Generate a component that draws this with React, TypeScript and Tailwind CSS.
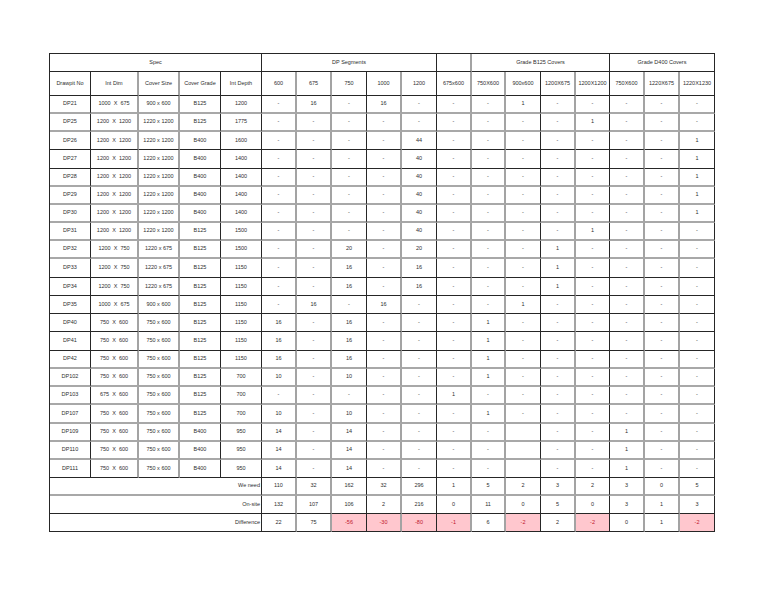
import React from 'react';

type Line = 'd' | 'g';

// right-hand line of each column (dark thin / grey wide, as in the printed sheet)
const vLines: Line[] = ['d', 'g', 'g', 'd', 'd', 'g', 'g', 'd', 'g', 'd', 'g', 'g', 'd', 'g', 'd', 'g', 'g', 'd'];

// bottom line of each grid row (0 = group header, 1 = column header, 2.. = body)
const darkRows = new Set([0, 1, 4, 5, 11, 12, 13, 14, 15, 22, 24, 25]);

const headers = [
  'Drawpit No', 'Int Dim', 'Cover Size', 'Cover Grade', 'Int Depth',
  '600', '675', '750', '1000', '1200',
  '675x600',
  '750X600', '900x600', '1200X675', '1200X1200',
  '750X600', '1220X675', '1220X1230',
];

const rows: string[][] = [
  ['DP21', '1000  X  675', '900 x 600', 'B125', '1200', '-', '16', '-', '16', '-', '-', '-', '1', '-', '-', '-', '-', '-'],
  ['DP25', '1200  X  1200', '1220 x 1200', 'B125', '1775', '-', '-', '-', '-', '-', '-', '-', '-', '-', '1', '-', '-', '-'],
  ['DP26', '1200  X  1200', '1220 x 1200', 'B400', '1600', '-', '-', '-', '-', '44', '-', '-', '-', '-', '-', '-', '-', '1'],
  ['DP27', '1200  X  1200', '1220 x 1200', 'B400', '1400', '-', '-', '-', '-', '40', '-', '-', '-', '-', '-', '-', '-', '1'],
  ['DP28', '1200  X  1200', '1220 x 1200', 'B400', '1400', '-', '-', '-', '-', '40', '-', '-', '-', '-', '-', '-', '-', '1'],
  ['DP29', '1200  X  1200', '1220 x 1200', 'B400', '1400', '-', '-', '-', '-', '40', '-', '-', '-', '-', '-', '-', '-', '1'],
  ['DP30', '1200  X  1200', '1220 x 1200', 'B400', '1400', '-', '-', '-', '-', '40', '-', '-', '-', '-', '-', '-', '-', '1'],
  ['DP31', '1200  X  1200', '1220 x 1200', 'B125', '1500', '-', '-', '-', '-', '40', '-', '-', '-', '-', '1', '-', '-', '-'],
  ['DP32', '1200  X  750', '1220 x 675', 'B125', '1500', '-', '-', '20', '-', '20', '-', '-', '-', '1', '-', '-', '-', '-'],
  ['DP33', '1200  X  750', '1220 x 675', 'B125', '1150', '-', '-', '16', '-', '16', '-', '-', '-', '1', '-', '-', '-', '-'],
  ['DP34', '1200  X  750', '1220 x 675', 'B125', '1150', '-', '-', '16', '-', '16', '-', '-', '-', '1', '-', '-', '-', '-'],
  ['DP35', '1000  X  675', '900 x 600', 'B125', '1150', '-', '16', '-', '16', '-', '-', '-', '1', '-', '-', '-', '-', '-'],
  ['DP40', '750  X  600', '750 x 600', 'B125', '1150', '16', '-', '16', '-', '-', '-', '1', '-', '-', '-', '-', '-', '-'],
  ['DP41', '750  X  600', '750 x 600', 'B125', '1150', '16', '-', '16', '-', '-', '-', '1', '-', '-', '-', '-', '-', '-'],
  ['DP42', '750  X  600', '750 x 600', 'B125', '1150', '16', '-', '16', '-', '-', '-', '1', '-', '-', '-', '-', '-', '-'],
  ['DP102', '750  X  600', '750 x 600', 'B125', '700', '10', '-', '10', '-', '-', '-', '1', '-', '-', '-', '-', '-', '-'],
  ['DP103', '675  X  600', '750 x 600', 'B125', '700', '-', '-', '-', '-', '-', '1', '-', '-', '-', '-', '-', '-', '-'],
  ['DP107', '750  X  600', '750 x 600', 'B125', '700', '10', '-', '10', '-', '-', '-', '1', '-', '-', '-', '-', '-', '-'],
  ['DP109', '750  X  600', '750 x 600', 'B400', '950', '14', '-', '14', '-', '-', '-', '-', '', '-', '-', '1', '-', '-'],
  ['DP110', '750  X  600', '750 x 600', 'B400', '950', '14', '-', '14', '-', '-', '-', '-', '', '-', '-', '1', '-', '-'],
  ['DP111', '750  X  600', '750 x 600', 'B400', '950', '14', '-', '14', '-', '-', '-', '-', '', '-', '-', '1', '-', '-'],
];

const totals: { label: string; values: string[] }[] = [
  { label: 'We need', values: ['110', '32', '162', '32', '296', '1', '5', '2', '3', '2', '3', '0', '5'] },
  { label: 'On-site', values: ['132', '107', '106', '2', '216', '0', '11', '0', '5', '0', '3', '1', '3'] },
  { label: 'Difference', values: ['22', '75', '-56', '-30', '-80', '-1', '6', '-2', '2', '-2', '0', '1', '-2'] },
];

function vClass(col: number) {
  return vLines[col] === 'd' ? 'border-r border-r-[#262626]' : 'border-r-2 border-r-[#a3a3a3]';
}

function hClass(row: number) {
  return darkRows.has(row) ? 'border-b border-b-[#262626]' : 'border-b-2 border-b-[#a8a8a8]';
}

function Cell({
  row,
  col,
  span,
  className,
  children,
}: {
  row: number;
  col: number;
  span?: string;
  className?: string;
  children?: React.ReactNode;
}) {
  return (
    <div
      className={`flex items-center ${span ?? ''} ${vClass(col)} ${hClass(row)} ${className ?? 'justify-center'}`}
    >
      {children}
    </div>
  );
}

export default function App() {
  return (
    <div className="w-[768px] h-[594px] bg-white font-['Liberation_Sans',Arial,sans-serif] text-[5.5px] leading-none text-[#2e2e2e]">
      <div className="pt-[53px] pl-[49px]">
        <div className="grid w-[666px] grid-cols-[41px_48px_41px_41px_41px_35px_35px_35px_35px_35px_35px_34px_35px_35px_34px_35px_35px_35px] grid-rows-[18px_24px_18px_18px_18px_19px_18px_18px_18px_18px_18px_19px_18px_18px_18px_19px_18px_18px_18px_19px_18px_18px_18px_18px_18px_18px] border-t border-l border-[#262626]">
          {/* Row 1: groups */}
          <Cell row={0} col={4} span="col-span-5">Spec</Cell>
          <Cell row={0} col={9} span="col-span-5">DP Segments</Cell>
          <Cell row={0} col={10} />
          <Cell row={0} col={14} span="col-span-4">Grade B125 Covers</Cell>
          <Cell row={0} col={17} span="col-span-3">Grade D400 Covers</Cell>

          {/* Row 2: column headers */}
          {headers.map((h, c) => (
            <Cell key={`h${c}`} row={1} col={c}>
              {h}
            </Cell>
          ))}

          {/* Body */}
          {rows.map((r, i) =>
            r.map((v, c) => (
              <Cell key={`r${i}c${c}`} row={i + 2} col={c}>
                <span className="whitespace-pre">{v}</span>
              </Cell>
            ))
          )}

          {/* Totals */}
          {totals.map((t, i) => {
            const row = rows.length + 2 + i;
            const isDiff = t.label === 'Difference';
            return (
              <React.Fragment key={t.label}>
                <Cell row={row} col={4} span="col-span-5" className="justify-end pr-[1px]">
                  {t.label}
                </Cell>
                {t.values.map((v, j) => {
                  const neg = isDiff && v.startsWith('-');
                  return (
                    <Cell
                      key={`${t.label}${j}`}
                      row={row}
                      col={j + 5}
                      className={neg ? 'justify-center bg-[#ffc7ce] text-[#c0182c]' : 'justify-center'}
                    >
                      {v}
                    </Cell>
                  );
                })}
              </React.Fragment>
            );
          })}
        </div>
      </div>
    </div>
  );
}
